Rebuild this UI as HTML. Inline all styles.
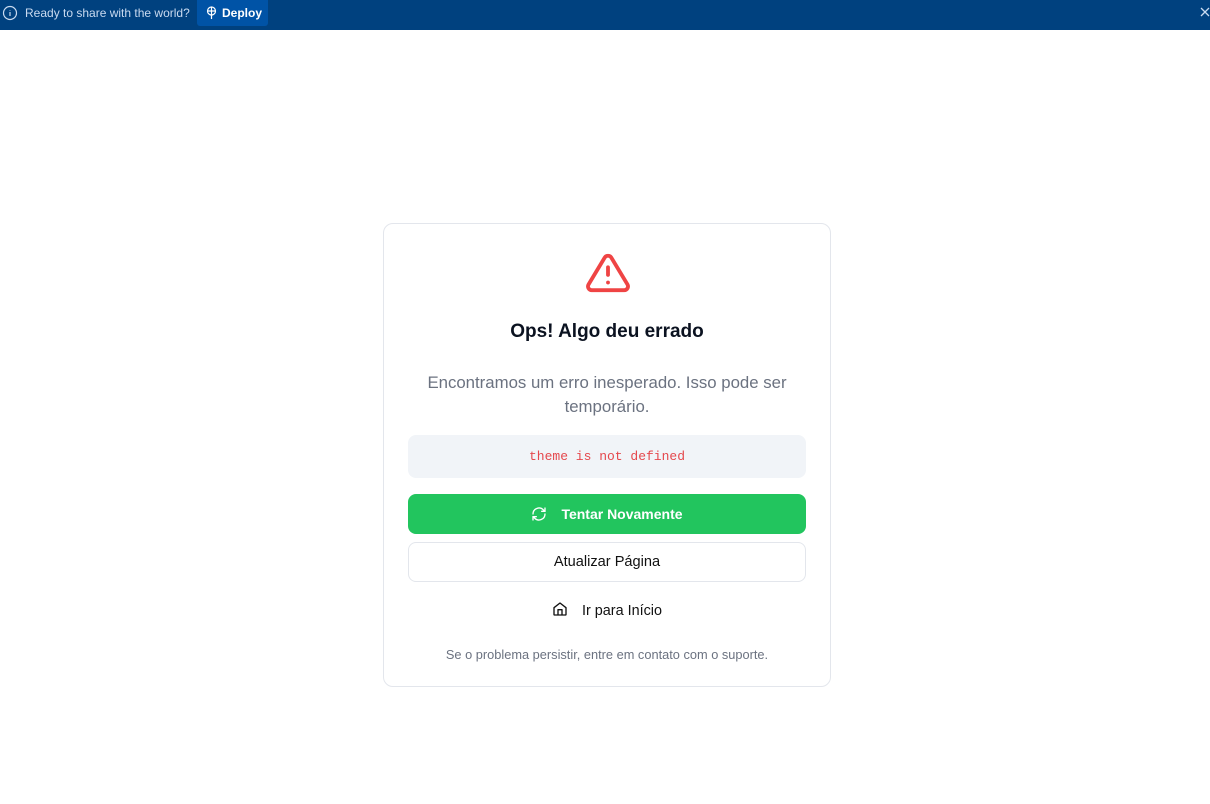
<!DOCTYPE html>
<html><head><meta charset="utf-8"><style>
*{box-sizing:border-box;margin:0;padding:0}
body{width:1210px;height:804px;background:#fff;font-family:"Liberation Sans",sans-serif;position:relative;overflow:hidden}
.bar{position:absolute;top:0;left:0;width:1210px;height:30px;background:#00417f;color:#c9daf0;font-size:12px}
.bar .t{position:absolute;left:25px;top:6px}
.bar .dep{position:absolute;left:197px;top:0;width:71px;height:26px;background:#0053a6;border-radius:0 0 3px 3px;color:#fff;font-size:12px;font-weight:bold;padding:6px 0 0 25px}
.card{position:absolute;left:383px;top:223px;width:448px;height:464px;border:1px solid #e3e6ec;border-radius:10px;text-align:center}
h1{position:absolute;top:97px;width:100%;font-size:19px;font-weight:bold;color:#0b1220}
.p{position:absolute;top:147px;left:20px;right:20px;font-size:16.8px;line-height:24px;color:#6b7280}
.err{position:absolute;top:211px;left:24px;width:398px;height:43px;background:#f1f4f8;border-radius:8px;font-family:"Liberation Mono",monospace;font-size:13px;color:#e5484d;padding-top:14px}
.g{position:absolute;top:270px;left:24px;width:398px;height:40px;background:#22c55e;border-radius:8px;color:#fff;font-weight:bold;font-size:14px;padding-top:12px}
.w{position:absolute;top:318px;left:24px;width:398px;height:40px;border:1px solid #e3e6ec;border-radius:8px;color:#111;font-size:14.6px;padding-top:11px}
.h{position:absolute;top:377px;width:100%;font-size:14.4px;color:#111}
.s{position:absolute;top:423px;width:100%;font-size:12.8px;color:#6b7280}
</style></head><body>
<div class="bar">
<svg style="position:absolute;left:2px;top:5px" width="16" height="16" viewBox="0 0 16 16" fill="none" stroke="#c9daf0" stroke-width="1.2"><circle cx="8" cy="8" r="6.5"/><path d="M8 7v4M8 5v.5"/></svg>
<span class="t">Ready to share with the world?</span>
<div class="dep"><svg style="position:absolute;left:9px;top:6px" width="11" height="13" viewBox="0 0 11 13" fill="none" stroke="#fff" stroke-width="1.2"><circle cx="5.5" cy="5" r="4"/><path d="M5.5 9v4M2 5h7M5.5 1v8"/></svg>Deploy</div>
<svg style="position:absolute;left:1200px;top:7px" width="10" height="10" viewBox="0 0 10 10" stroke="#c9daf0" stroke-width="1.3"><path d="M1 1l8 8M9 1l-8 8"/></svg>
</div>
<div class="card">
<svg style="position:absolute;left:201px;top:28px" width="46" height="42" viewBox="0 0 24 22" fill="none" stroke="#ef4444" stroke-width="2" stroke-linecap="round" stroke-linejoin="round"><path d="M10.3 2.9L1.8 17a2 2 0 001.7 3h17a2 2 0 001.7-3L13.7 2.9a2 2 0 00-3.4 0z"/><path d="M12 8v4M12 16h.01"/></svg>
<h1>Ops! Algo deu errado</h1>
<div class="p">Encontramos um erro inesperado. Isso pode ser temporário.</div>
<div class="err">theme is not defined</div>
<div class="g"><svg style="vertical-align:-3px;margin-right:14px" width="16" height="16" viewBox="0 0 24 24" fill="none" stroke="#fff" stroke-width="2" stroke-linecap="round"><path d="M21 12a9 9 0 01-15.5 6.2L3 16M3 12a9 9 0 0115.5-6.2L21 8M21 3v5h-5M3 21v-5h5"/></svg>Tentar Novamente</div>
<div class="w">Atualizar Página</div>
<div class="h"><svg style="vertical-align:-2px;margin-right:14px" width="16" height="16" viewBox="0 0 24 24" fill="none" stroke="#111" stroke-width="2" stroke-linejoin="round"><path d="M3 10l9-7 9 7v10a1 1 0 01-1 1H4a1 1 0 01-1-1z"/><path d="M9 21v-8h6v8"/></svg>Ir para Início</div>
<div class="s">Se o problema persistir, entre em contato com o suporte.</div>
</div>
</body></html>
